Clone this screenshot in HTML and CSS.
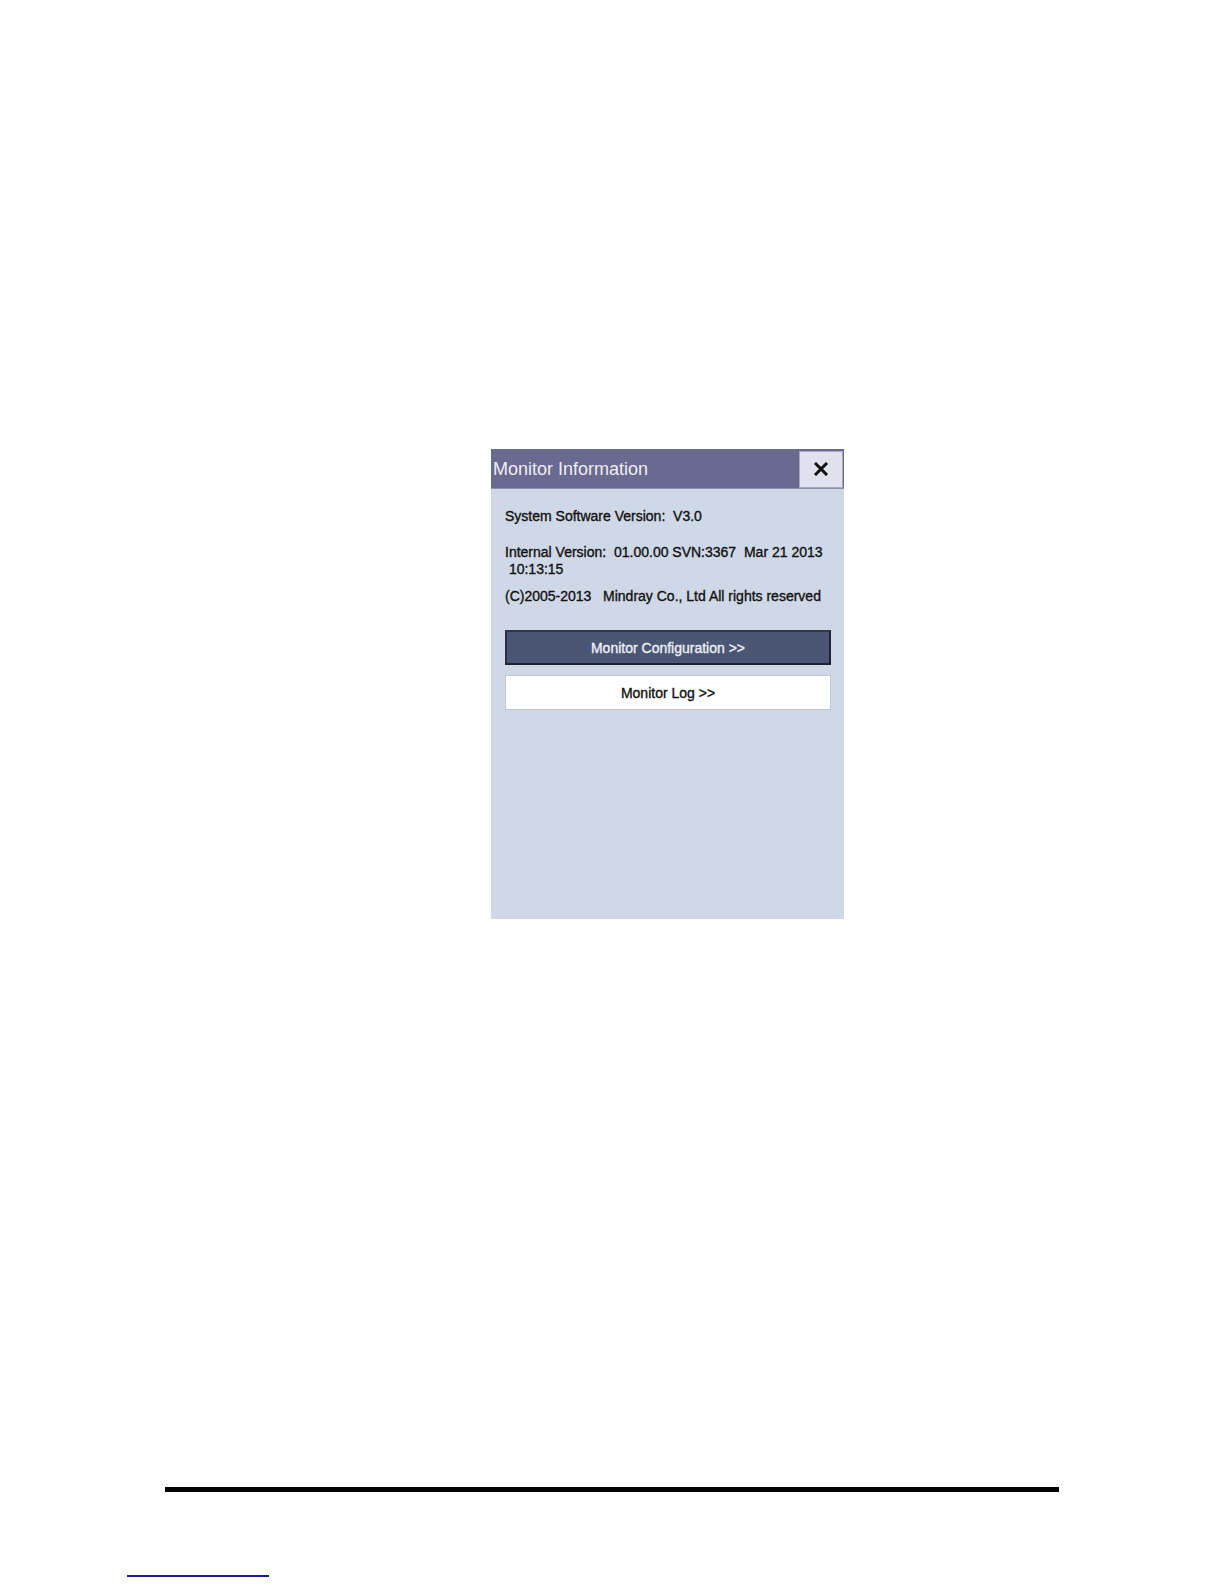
FILE: index.html
```html
<!DOCTYPE html>
<html>
<head>
<meta charset="utf-8">
<link rel="stylesheet" href="styles.css">
</head>
<body>
<div class="page">
  <div class="stage">
    <div class="dialog">
      <div class="header">
        <span class="title">Monitor Information</span>
        <div class="close">
          <svg width="14" height="14" viewBox="0 0 14 14"><path d="M2 2 L12 12 M12 2 L2 12" stroke="#111" stroke-width="3" stroke-linecap="square"/></svg>
        </div>
      </div>
      <div class="body">
        <p class="line l1">System Software Version:&nbsp; V3.0</p>
        <p class="line l2">Internal Version:&nbsp; 01.00.00 SVN:3367&nbsp; Mar 21 2013<br>&nbsp;10:13:15</p>
        <p class="line l3">(C)2005-2013 &nbsp; Mindray Co., Ltd All rights reserved</p>
        <div class="btn btn-dark">Monitor Configuration &gt;&gt;</div>
        <div class="btn btn-light">Monitor Log &gt;&gt;</div>
      </div>
    </div>
  </div>
  <div class="rule"></div>
  <div class="foot"><span class="link"></span></div>
</div>
</body>
</html>
```

FILE: styles.css
```css
html, body {
  margin: 0;
  padding: 0;
  background: #ffffff;
}
.page {
  width: 1224px;
  height: 1584px;
  font-family: "Liberation Sans", Arial, sans-serif;
  overflow: hidden;
}
.stage {
  padding-top: 449px;
  padding-left: 491px;
}
.dialog {
  width: 353px;
  height: 470px;
  background: #cfd8e6;
  display: flex;
  flex-direction: column;
}
.header {
  height: 40px;
  background: #6a6990;
  display: flex;
  align-items: center;
  justify-content: space-between;
  border-bottom: 1px solid #8e8fb0;
  box-sizing: border-box;
}
.title {
  color: #eeeef4;
  font-size: 18px;
  padding-left: 2px;
  padding-top: 1px;
}
.close {
  width: 44px;
  height: 37px;
  margin-right: 1px;
  margin-top: 1px;
  background: #dfe2ec;
  border: 1px solid #a6a8bc;
  box-sizing: border-box;
  display: flex;
  align-items: center;
  justify-content: center;
}
.body {
  padding: 0 13px 0 14px;
  flex: 1;
}
.line {
  margin: 0;
  font-size: 14px;
  line-height: 17px;
  color: #111;
  -webkit-text-stroke: 0.35px #111;
}
.l1 { margin-top: 19px; }
.l2 { margin-top: 19px; }
.l3 { margin-top: 10px; }
.btn {
  height: 35px;
  box-sizing: border-box;
  display: flex;
  align-items: center;
  justify-content: center;
  font-size: 14px;
  -webkit-text-stroke: 0.35px currentColor;
}
.btn-dark {
  margin-top: 25px;
  background: #4b5674;
  color: #eef0f5;
  border: 2px solid #1c2230;
  border-top-color: #30384a;
  border-left-color: #2a3040;
}
.btn-light {
  margin-top: 10px;
  background: #ffffff;
  color: #111;
  border: 1px solid #c2c6d2;
}
.rule {
  margin-top: 568px;
  margin-left: 165px;
  width: 894px;
  height: 5px;
  background: #000;
}
.foot {
  padding-top: 83px;
  padding-left: 127px;
}
.link {
  display: block;
  width: 142px;
  height: 2px;
  background: #1a1aa0;
}
```
